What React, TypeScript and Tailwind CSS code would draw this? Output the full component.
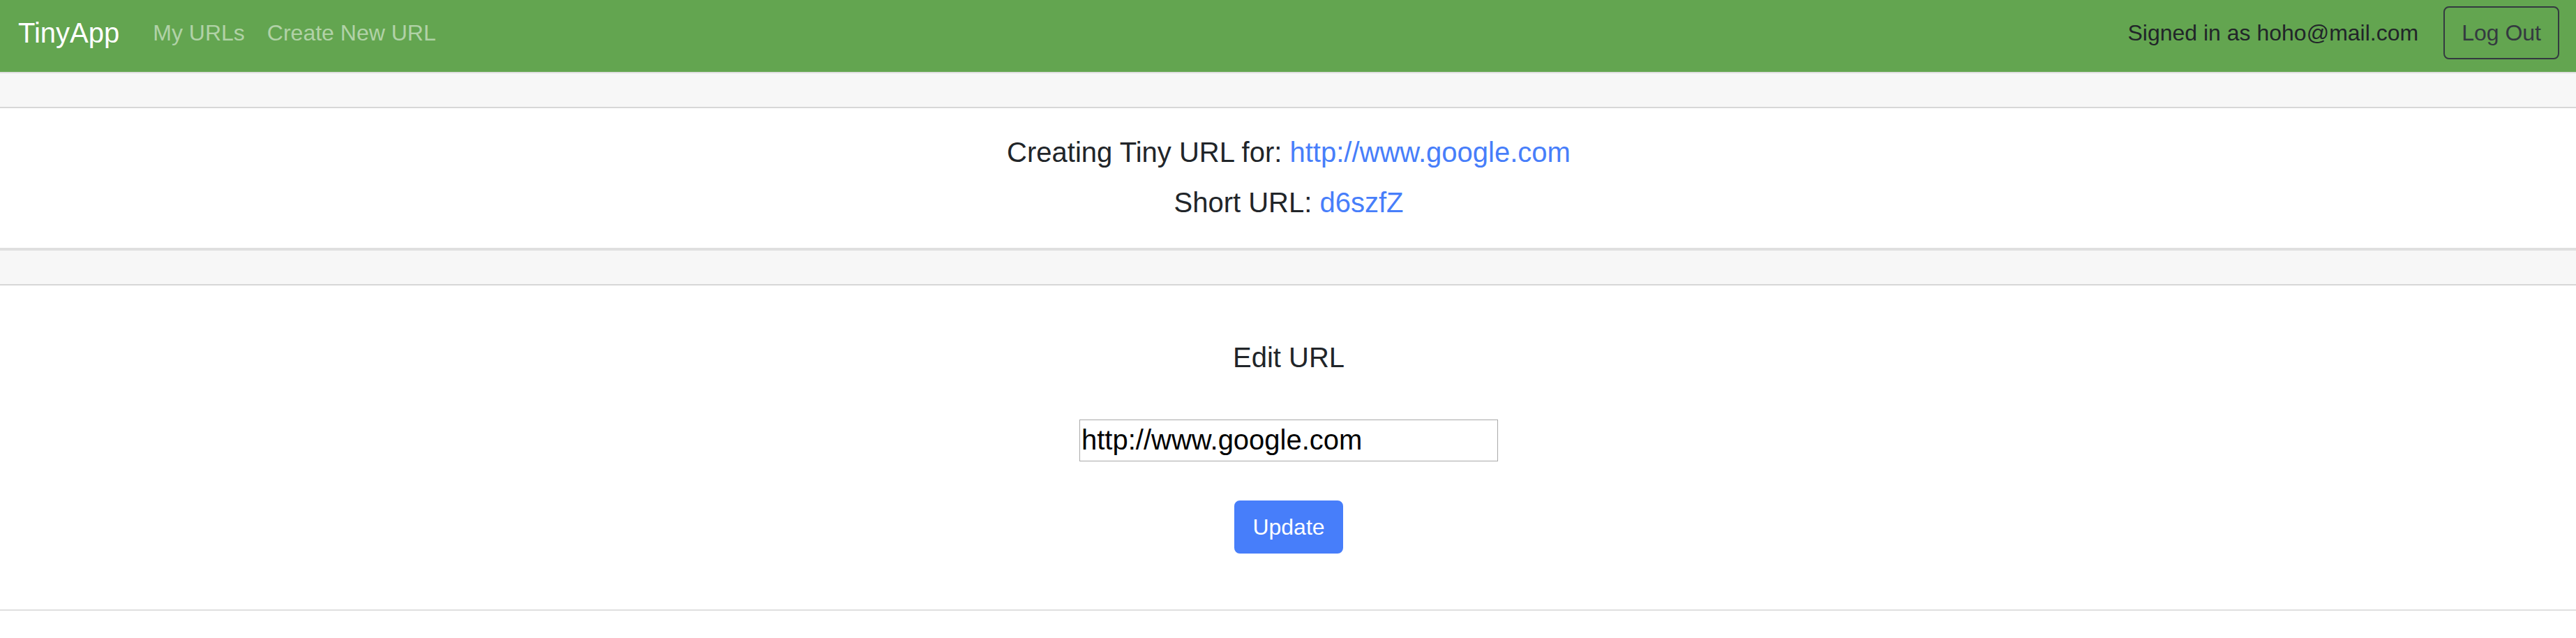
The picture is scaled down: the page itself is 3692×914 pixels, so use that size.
import React from "react";

const card =
  "border-y-2 border-[#dfdfdf] bg-white text-center text-[40px] leading-[48px]";
const cardHeader = "h-[50px] border-b-2 border-[#d7d7d7] bg-[#f7f7f7]";

export default function App() {
  return (
    <div className="min-h-screen bg-white font-['Liberation_Sans',Arial,sans-serif] text-[32px] leading-[48px] text-[#212529]">
      <nav className="flex items-center justify-between bg-[#63a550] pt-[9px] pr-6 pb-[18px] pl-[26px]">
        <div className="flex items-center">
          <a href="#" className="mr-8 text-[40px] leading-[60px] text-white">
            TinyApp
          </a>
          <a href="#urls" className="px-4 text-white/50">
            My URLs
          </a>
          <a href="#new" className="px-4 text-white/50">
            Create New URL
          </a>
        </div>
        <form className="flex items-center gap-9" onSubmit={(e) => e.preventDefault()}>
          <span>Signed in as hoho@mail.com</span>
          <button
            type="submit"
            className="rounded-lg border-2 border-[#343a40] px-6 py-3 text-[#343a40]"
          >
            Log Out
          </button>
        </form>
      </nav>

      <main>
        <section className={card}>
          <div className={cardHeader} />
          <div className="flex flex-col gap-6 pt-[39px] pb-[41px] pl-0.5">
            <h5>
              Creating Tiny URL for:{" "}
              <a href="http://www.google.com" className="text-[#477efa]">
                http://www.google.com
              </a>
            </h5>
            <h5>
              Short URL:{" "}
              <a href="#d6szfZ" className="text-[#477efa]">
                d6szfZ
              </a>
            </h5>
          </div>
        </section>

        <section className={card}>
          <div className={cardHeader} />
          <form
            className="flex flex-col items-center pt-[79px] pb-20 pl-0.5"
            onSubmit={(e) => e.preventDefault()}
          >
            <label htmlFor="long-url">Edit URL</label>
            <input
              id="long-url"
              type="text"
              defaultValue="http://www.google.com"
              className="mt-[65px] h-[60px] w-[600px] border border-[#a9a9a9] bg-white px-0.5 pb-0.5 text-black"
            />
            <button
              type="submit"
              className="mt-14 rounded-lg border-2 border-[#477efa] bg-[#477efa] px-6 py-3 text-[32px] leading-[48px] text-white"
            >
              Update
            </button>
          </form>
        </section>
      </main>
    </div>
  );
}
